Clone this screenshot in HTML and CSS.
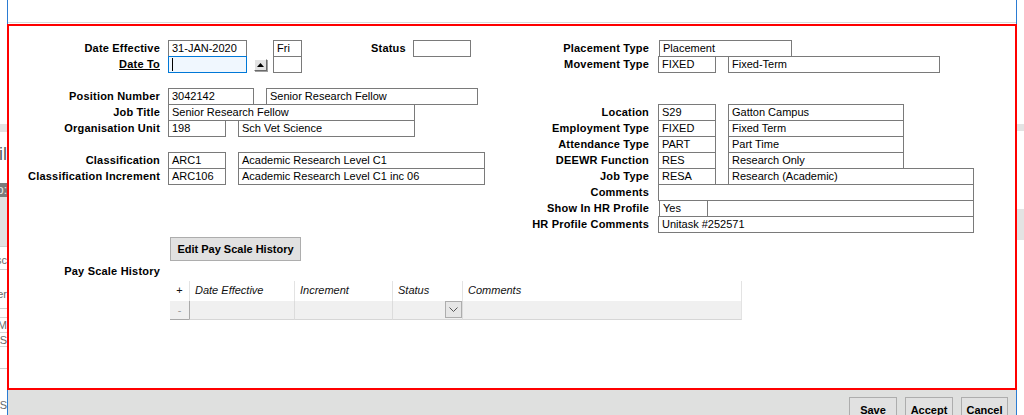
FILE: index.html
```html
<!DOCTYPE html>
<html lang="en">
<head>
<meta charset="utf-8">
<title>Placement</title>
<link rel="stylesheet" href="styles.css">
</head>
<body>
<div class="desktop">
  <div class="bg-left">
    <div class="bl-space-a"></div>
    <div class="bl-band"></div>
    <div class="bl-title"><span>Detail</span></div>
    <div class="bl-dark"><span>Info:</span></div>
    <div class="bl-light"></div>
    <div class="bl-line"></div>
    <div class="bl-text bl-t1"><span>Desc</span></div>
    <div class="bl-line"></div>
    <div class="bl-text bl-t2"><span>Officer</span></div>
    <div class="bl-line bl-l2"></div>
    <div class="bl-text bl-t3"><span>M</span></div>
    <div class="bl-text bl-t4"><span>S</span></div>
    <div class="bl-line bl-l3"></div>
    <div class="bl-text bl-t5"><span>S</span></div>
  </div>

  <div class="dialog">
    <div class="dlg-top"></div>

    <div class="panel">
      <div class="form">
        <div class="col col-left">
          <div class="row">
            <span class="lbl">Date Effective</span>
            <div class="fld w79">31-JAN-2020</div>
            <div class="fld w29 ml26">Fri</div>
            <span class="status-lbl">Status</span>
            <div class="fld w58"></div>
          </div>
          <div class="row">
            <span class="lbl"><u>Date To</u></span>
            <div class="fld w79 focus"><span class="caret"></span></div>
            <div class="spin">
              <svg width="7" height="4" viewBox="0 0 7 4"><path d="M0 4 L3.5 0 L7 4 Z" fill="#000"/></svg>
            </div>
            <div class="fld w29 ml6"></div>
          </div>
          <div class="row"></div>
          <div class="row">
            <span class="lbl">Position Number</span>
            <div class="fld w86">3042142</div>
            <div class="fld w212 ml12">Senior Research Fellow</div>
          </div>
          <div class="row">
            <span class="lbl">Job Title</span>
            <div class="fld w247">Senior Research Fellow</div>
          </div>
          <div class="row">
            <span class="lbl">Organisation Unit</span>
            <div class="fld w58">198</div>
            <div class="fld w177 ml12">Sch Vet Science</div>
          </div>
          <div class="row"></div>
          <div class="row">
            <span class="lbl">Classification</span>
            <div class="fld w58">ARC1</div>
            <div class="fld w247 ml12">Academic Research Level C1</div>
          </div>
          <div class="row">
            <span class="lbl">Classification Increment</span>
            <div class="fld w58">ARC106</div>
            <div class="fld w247 ml12">Academic Research Level C1 inc 06</div>
          </div>

          <button class="edit-btn" type="button">Edit Pay Scale History</button>
          <div class="pay-lbl">Pay Scale History</div>

          <div class="grid">
            <div class="grid-head">
              <div class="gc gc-pm">+</div>
              <div class="gc gc-date">Date Effective</div>
              <div class="gc gc-inc">Increment</div>
              <div class="gc gc-status">Status</div>
              <div class="gc gc-comm">Comments</div>
            </div>
            <div class="grid-row">
              <div class="gd gc-pm gd-minus">-</div>
              <div class="gd gc-date gd-first"></div>
              <div class="gd gc-inc"></div>
              <div class="gd gc-status gd-sel">
                <div class="dd">
                  <svg width="9" height="5" viewBox="0 0 9 5"><path d="M0.5 0.5 L4.5 4.5 L8.5 0.5" fill="none" stroke="#555" stroke-width="1"/></svg>
                </div>
              </div>
              <div class="gd gc-comm"></div>
            </div>
          </div>
        </div>

        <div class="col col-right">
          <div class="row">
            <span class="lbl">Placement Type</span>
            <div class="fld w133 ml1">Placement</div>
          </div>
          <div class="row">
            <span class="lbl">Movement Type</span>
            <div class="fld w58">FIXED</div>
            <div class="fld w212 ml12">Fixed-Term</div>
          </div>
          <div class="row"></div>
          <div class="row"></div>
          <div class="row">
            <span class="lbl">Location</span>
            <div class="fld w58">S29</div>
            <div class="fld w176 ml12">Gatton Campus</div>
          </div>
          <div class="row">
            <span class="lbl">Employment Type</span>
            <div class="fld w58">FIXED</div>
            <div class="fld w176 ml12">Fixed Term</div>
          </div>
          <div class="row">
            <span class="lbl">Attendance Type</span>
            <div class="fld w58">PART</div>
            <div class="fld w176 ml12">Part Time</div>
          </div>
          <div class="row">
            <span class="lbl">DEEWR Function</span>
            <div class="fld w58">RES</div>
            <div class="fld w176 ml12">Research Only</div>
          </div>
          <div class="row">
            <span class="lbl">Job Type</span>
            <div class="fld w58">RESA</div>
            <div class="fld w246 ml12">Research (Academic)</div>
          </div>
          <div class="row">
            <span class="lbl">Comments</span>
            <div class="fld w316"></div>
          </div>
          <div class="row">
            <span class="lbl">Show In HR Profile</span>
            <div class="fld w49 ml1">Yes</div>
            <div class="fld w267 mln1"></div>
          </div>
          <div class="row">
            <span class="lbl">HR Profile Comments</span>
            <div class="fld w316">Unitask #252571</div>
          </div>
        </div>
      </div>
    </div>

    <div class="dlg-bottom">
      <button class="act-btn w48" type="button">Save</button>
      <button class="act-btn w48" type="button">Accept</button>
      <button class="act-btn w47" type="button">Cancel</button>
    </div>
  </div>

  <div class="bg-right">
    <div class="br-space-a"></div>
    <div class="br-band"></div>
    <div class="br-space-b"></div>
    <div class="br-block"></div>
  </div>
</div>
</body>
</html>
```

FILE: styles.css
```css
* { box-sizing: border-box; }

html, body {
  margin: 0;
  padding: 0;
}

body {
  width: 1024px;
  height: 415px;
  overflow: hidden;
  background: #fff;
  font-family: "Liberation Sans", Arial, sans-serif;
  font-size: 11px;
  color: #000;
}

.desktop {
  display: flex;
  height: 415px;
}

/* ---------- background window fragments ---------- */
.bg-left {
  width: 7px;
  flex: none;
  overflow: hidden;
  display: flex;
  flex-direction: column;
  background: #fff;
}
.bg-left > div {
  flex: none;
  display: flex;
  justify-content: flex-end;
  white-space: nowrap;
}
.bl-space-a { height: 124px; }
.bl-band { height: 8px; background: #e3e3e3; }
.bl-title {
  height: 51px;
  padding-top: 12px;
  font-size: 18px;
  line-height: 20px;
  color: #5b5b5b;
}
.bl-dark {
  height: 14px;
  background: #7b7b7b;
  color: #e8e8e8;
  font-size: 12px;
  line-height: 14px;
}
.bl-light { height: 49px; background: #e1e1e1; }
.bl-line { height: 1px; background: #cfcfcf; }
.bl-text { color: #6a6a6a; font-size: 11px; line-height: 13px; }
.bl-t1 { height: 22px; padding-top: 7px; }
.bl-t2 { height: 38px; padding-top: 18px; }
.bl-l2 { margin-bottom: 8px; }
.bl-t3 { height: 15px; border-top: 1px solid #d6d6d6; padding-top: 1px; }
.bl-t4 { height: 15px; border-top: 1px solid #d6d6d6; border-bottom: 1px solid #d6d6d6; padding-top: 1px; }
.bl-l3 { margin-top: 21px; }
.bl-t5 { height: 26px; padding-top: 30px; }

.bg-right {
  width: 7px;
  flex: none;
  display: flex;
  flex-direction: column;
}
.br-space-a { height: 124px; flex: none; }
.br-band { height: 7px; flex: none; background: #e3e3e3; }
.br-space-b { height: 78px; flex: none; }
.br-block { height: 31px; flex: none; background: #e3e3e3; }

/* ---------- dialog ---------- */
.dialog {
  width: 1010px;
  flex: none;
  display: flex;
  flex-direction: column;
}

.dlg-top {
  height: 24px;
  flex: none;
  border-left: 1px solid #2b7cd3;
  border-right: 1px solid #2b7cd3;
  background: linear-gradient(#fff 0 22px, #dadada 22px 23px, #fff 23px);
}

.panel {
  height: 366px;
  flex: none;
  border: 2px solid #ff0000;
  padding-top: 14px;
  background: #fff;
}

.dlg-bottom {
  flex: 1;
  background: #dfe0df;
  border-left: 1px solid #2b7cd3;
  border-right: 1px solid #2b7cd3;
  display: flex;
  justify-content: flex-end;
  align-items: flex-start;
  gap: 8px;
  padding: 7px 8px 0 0;
}

.act-btn {
  flex: none;
  height: 26px;
  padding: 0;
  border: 1px solid #adadad;
  background: #e1e1e1;
  font-family: "Liberation Sans", Arial, sans-serif;
  font-size: 11px;
  font-weight: bold;
  line-height: 21px;
  color: #000;
  text-align: center;
  display: block;
}
.act-btn.w48 { width: 48px; }
.act-btn.w47 { width: 47px; }

/* ---------- form ---------- */
.form {
  display: flex;
  align-items: flex-start;
}

.col-left { width: 491px; flex: none; }
.col-right { flex: 1; }

.row {
  display: flex;
  align-items: flex-start;
  height: 16px;
}

.lbl {
  flex: none;
  width: 159px;
  padding-right: 8px;
  text-align: right;
  font-weight: bold;
  line-height: 17px;
  letter-spacing: 0.2px;
  white-space: nowrap;
}
.col-right .lbl {
  width: 158px;
  padding-right: 9px;
}

.status-lbl {
  flex: none;
  width: 42px;
  margin-left: 69px;
  font-weight: bold;
  line-height: 17px;
  letter-spacing: 0.2px;
}

.fld {
  flex: none;
  height: 17px;
  border: 1px solid #7a7a7a;
  padding: 0 3px;
  line-height: 15px;
  white-space: nowrap;
  overflow: hidden;
  background: #fff;
  color: #000;
}
.fld.focus {
  border-color: #0078d7;
  background: #f0f7fe;
  display: flex;
  align-items: flex-start;
}
.caret {
  display: block;
  width: 1px;
  height: 13px;
  margin-top: 1px;
  background: #000;
}

.w29 { width: 29px; }
.w49 { width: 49px; }
.w58 { width: 58px; }
.w79 { width: 79px; }
.w86 { width: 86px; }
.w133 { width: 133px; }
.w176 { width: 176px; }
.w177 { width: 177px; }
.w212 { width: 212px; }
.w246 { width: 246px; }
.w247 { width: 247px; }
.w267 { width: 267px; }
.w316 { width: 316px; }
.ml1 { margin-left: 1px; }
.mln1 { margin-left: -1px; }
.ml6 { margin-left: 6px; }
.ml12 { margin-left: 12px; }
.ml26 { margin-left: 26px; }

.spin {
  flex: none;
  width: 13px;
  height: 12px;
  margin: 3px 0 0 7px;
  background: #e3e3e3;
  border: 1px solid;
  border-color: #fff #6a6a6a #6a6a6a #fff;
  box-shadow: 1px 1px 0 #a0a0a0;
  display: flex;
  align-items: center;
  justify-content: center;
}
.spin svg { display: block; }

.edit-btn {
  display: block;
  width: 131px;
  height: 24px;
  margin: 53px 0 0 161px;
  padding: 0;
  border: 1px solid #adadad;
  background: #e1e1e1;
  font-family: "Liberation Sans", Arial, sans-serif;
  font-size: 11px;
  font-weight: bold;
  line-height: 22px;
  color: #000;
  text-align: center;
}

.pay-lbl {
  width: 159px;
  padding-right: 8px;
  margin-top: 2px;
  text-align: right;
  font-weight: bold;
  line-height: 17px;
  letter-spacing: 0.2px;
  white-space: nowrap;
}

/* ---------- pay scale grid ---------- */
.grid {
  margin: 1px 0 0 161px;
  width: 572px;
}
.grid-head,
.grid-row {
  display: flex;
}
.gc {
  flex: none;
  height: 20px;
  line-height: 18px;
  padding-left: 5px;
  font-style: italic;
  border-left: 1px solid #e3e3e3;
  white-space: nowrap;
  color: #111;
}
.gc-pm { width: 19px; }
.gc-date { width: 105px; }
.gc-inc { width: 98px; }
.gc-status { width: 70px; }
.gc-comm { width: 280px; border-right: 1px solid #e3e3e3; }
.gc.gc-pm {
  border-left: none;
  padding-left: 0;
  text-align: center;
  font-style: normal;
}

.gd {
  flex: none;
  height: 19px;
  background: #f0f0f0;
  border-left: 1px solid #dcdcdc;
  border-bottom: 1px solid #d6d6d6;
}
.gd.gc-comm { border-right: 1px solid #e3e3e3; }
.gd-minus {
  border-left: none;
  border-bottom-color: #a9a9a9;
  color: #9a9a9a;
  text-align: center;
  line-height: 18px;
}
.gd.gd-first { border-left-color: #a9a9a9; }
.gd-sel {
  display: flex;
  justify-content: flex-end;
  align-items: flex-start;
}
.dd {
  width: 17px;
  height: 17px;
  border: 1px solid #adadad;
  background: #e6e6e6;
  display: flex;
  align-items: center;
  justify-content: center;
}
.dd svg { display: block; }
```
